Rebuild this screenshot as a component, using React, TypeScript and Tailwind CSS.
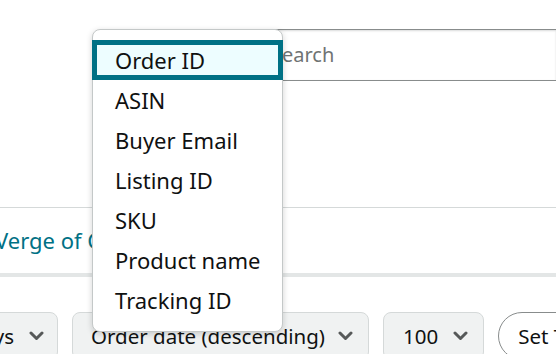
import React from "react";

const Chevron = () => (
  <svg width="15" height="10" viewBox="0 0 15 10" className="shrink-0">
    <polyline points="2,2 7.5,7.5 13,2" fill="none" stroke="#565959" strokeWidth="3" strokeLinecap="round" strokeLinejoin="round" />
  </svg>
);

const items = ["Order ID", "ASIN", "Buyer Email", "Listing ID", "SKU", "Product name", "Tracking ID"];

export default function App() {
  return (
    <div
      className="relative h-[354px] w-[556px] overflow-hidden bg-white text-[#0f1111]"
      style={{ fontFamily: '"Noto Sans", "Open Sans", sans-serif' }}
    >
      <div className="h-[29px]" />
      <div className="flex h-[52px]">
        <div className="w-[258px] shrink-0" />
        <div className="flex flex-1 items-center border border-r-0 border-[#888c8c] pl-[12px] text-[20px] text-[#6f7373] shadow-[inset_0_1px_2px_rgba(15,17,17,0.15)]">
          Search
        </div>
      </div>
      <div className="h-[126px]" />
      <div className="h-px bg-[#d5d9d9]" />
      <div className="flex h-[65px] items-center">
        <span className="ml-[-5px] whitespace-nowrap text-[22px] text-[#007185]">Verge of Chaos</span>
      </div>
      <div className="h-[4px] bg-[#e3e6e6]" />
      <div className="h-[35px]" />
      <div className="flex gap-[14px] whitespace-nowrap text-[20.5px]">
        <div className="ml-[-102px] flex h-[48px] w-[160px] shrink-0 items-center justify-end gap-[15px] rounded-[8px] border border-[#d5d9d9] bg-[#f0f2f2] pr-[13px]">
          <span>Last 30 days</span>
          <Chevron />
        </div>
        <div className="flex h-[48px] shrink-0 items-center gap-[13px] rounded-[8px] border border-[#d5d9d9] bg-[#f0f2f2] pl-[18px] pr-[15px]">
          <span>Order date (descending)</span>
          <Chevron />
        </div>
        <div className="flex h-[48px] shrink-0 items-center gap-[15px] rounded-[8px] border border-[#d5d9d9] bg-[#f0f2f2] pl-[19px] pr-[15px]">
          <span>100</span>
          <Chevron />
        </div>
        <div className="flex h-[48px] shrink-0 items-center rounded-[24px] border border-[#888c8c] bg-white pl-[19px] pr-[19px]">
          Set Table Preferences
        </div>
      </div>

      <div className="absolute left-[92px] top-[29px] w-[191px] rounded-[8px] border border-[#c4c8c8] bg-white pb-[11px] pt-[10px] shadow-[0_2px_6px_rgba(15,17,17,0.18)]">
        {items.map((t, i) => (
          <div
            key={t}
            className={
              i === 0
                ? "-mx-px flex h-[40px] items-center border-[5px] border-[#007185] bg-[#edfdff] pl-[18px] text-[22px]"
                : "-mx-px flex h-[40px] items-center border-[5px] border-transparent pl-[18px] text-[22px]"
            }
          >
            {t}
          </div>
        ))}
      </div>
    </div>
  );
}
